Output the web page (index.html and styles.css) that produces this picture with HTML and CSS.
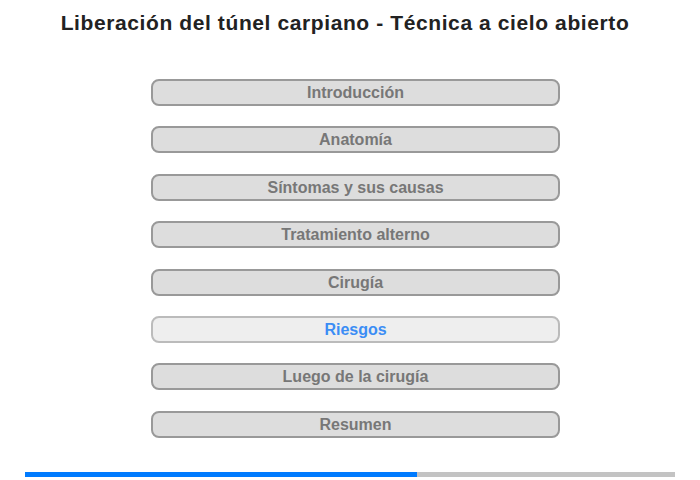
FILE: index.html
```html
<!DOCTYPE html>
<html lang="es">
<head>
  <meta charset="UTF-8" />
  <title>Liberación del túnel carpiano</title>
  <link rel="stylesheet" href="styles.css">
</head>
<body>

  <h1 class="title">Liberación del túnel carpiano - Técnica a cielo abierto</h1>

  <!-- Chapters -->
  <div class="chapters">
    <a class="chapter" href="#">Introducción</a>
    <a class="chapter" href="#">Anatomía</a>
    <a class="chapter" href="#">Síntomas y sus causas</a>
    <a class="chapter" href="#">Tratamiento alterno</a>
    <a class="chapter" href="#">Cirugía</a>
    <a class="chapter current" href="#">Riesgos</a>
    <a class="chapter" href="#">Luego de la cirugía</a>
    <a class="chapter" href="#">Resumen</a>
  </div>

  <!-- Progress -->
  <div class="progress">
    <div class="progress-fill" style="width: 60.3%"></div>
  </div>

</body>
</html>
```

FILE: styles.css
```css
body, html {
  margin: 0;
  background: white;
  font-family: "Liberation Sans", Arial, sans-serif;
}

body {
  width: 700px;
  height: 480px;
  position: relative;
}

.title {
  margin: 0;
  padding-top: 11px;
  padding-right: 10px;
  font-size: 21px;
  line-height: 24px;
  letter-spacing: 0.6px;
  font-weight: bold;
  color: #222;
  text-align: center;
}

.chapters {
  display: flex;
  flex-direction: column;
  gap: 20.4px;
  width: 409px;
  margin: 44px 0 0 151px;
}

.chapter {
  display: block;
  box-sizing: border-box;
  height: 27px;
  line-height: 23px;
  border: 2px solid #999;
  border-radius: 8px;
  background: #ddd;
  color: #777;
  font-size: 16px;
  font-weight: bold;
  text-align: center;
  text-decoration: none;
}

.chapter.current {
  background: #eee;
  border-color: #bbb;
  color: #3b8df5;
}

/* Bottom progress bar */
.progress {
  position: absolute;
  left: 25px;
  top: 472px;
  width: 650px;
  height: 5px;
  background: #c3c3c3;
}

.progress-fill {
  height: 100%;
  background: #007bff;
}
```
